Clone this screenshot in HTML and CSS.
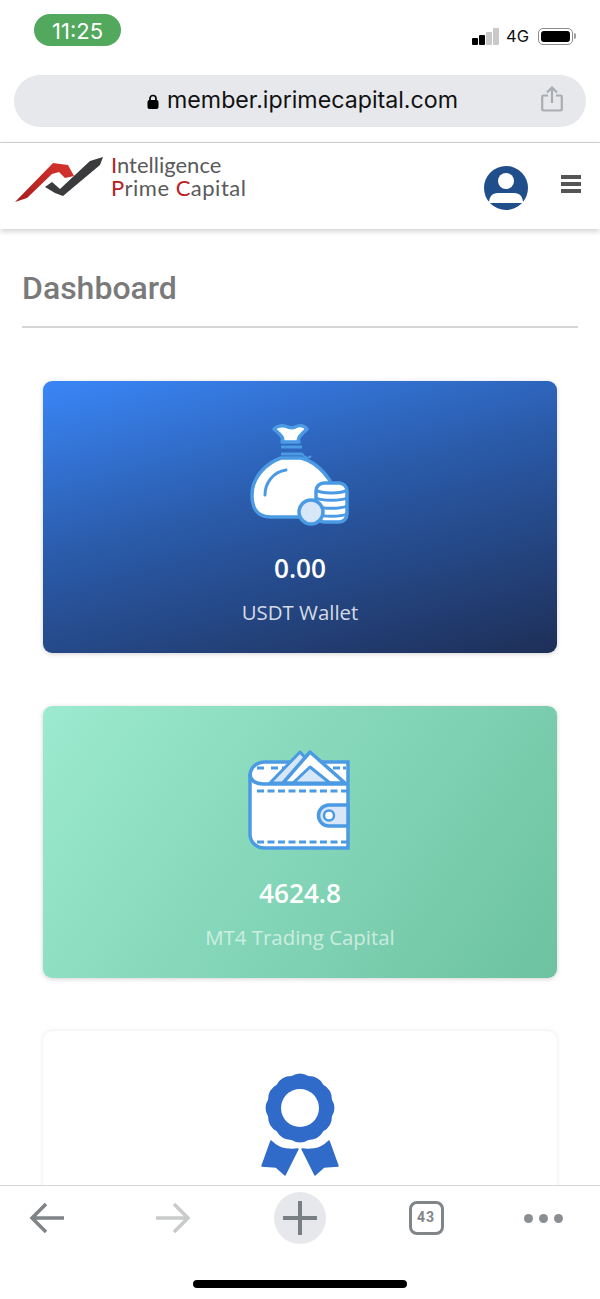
FILE: index.html
```html
<!DOCTYPE html>
<html lang="en">
<head>
    <meta charset="UTF-8">
    <meta name="viewport" content="width=device-width, initial-scale=1.0">
    <title>Dashboard</title>
    <link rel="stylesheet" href="styles.css">
</head>
<body>
    <div class="phone">
        <!-- Status bar -->
        <div class="status-bar">
            <div class="clock">11:25</div>
            <div class="status-right">
                <div class="signal">
                    <span class="bar bar-1"></span>
                    <span class="bar bar-2"></span>
                    <span class="bar bar-3"></span>
                    <span class="bar bar-4"></span>
                </div>
                <span class="network">4G</span>
                <div class="battery"><span class="battery-fill"></span></div>
                <span class="battery-tip"></span>
            </div>
        </div>

        <!-- Browser address bar -->
        <div class="url-wrap">
            <div class="url-bar">
                <div class="url-text">
                    <svg class="lock" width="12" height="15" viewBox="0 0 12 15">
                        <path d="M3 7V4.500a3 3 0 0 1 6 0V7" fill="none" stroke="#000" stroke-width="1.700"/>
                        <rect x="0.500" y="6" width="11" height="9" rx="2" fill="#000"/>
                    </svg>
                    <span>member.iprimecapital.com</span>
                </div>
                <svg class="share" width="22" height="26" viewBox="0 0 22 26">
                    <path d="M7 9.500H2.500a1.300 1.300 0 0 0-1.300 1.300v12.400a1.300 1.300 0 0 0 1.300 1.300h17a1.300 1.300 0 0 0 1.300-1.300V10.800a1.300 1.300 0 0 0-1.300-1.300H15" fill="none" stroke="#a9acb1" stroke-width="2.200"/>
                    <path d="M11 17V2M6 6.500 11 1.500l5 5" fill="none" stroke="#a9acb1" stroke-width="2.200"/>
                </svg>
            </div>
        </div>

        <!-- Site header -->
        <header class="site-header">
            <div class="logo">
                <svg width="92" height="50" viewBox="15 155 92 50">
                    <defs>
                        <linearGradient id="redBand" x1="0" y1="1" x2="1" y2="0">
                            <stop offset="0" stop-color="#a81c1c"/>
                            <stop offset="1" stop-color="#d8352f"/>
                        </linearGradient>
                    </defs>
                    <path d="M45 187 52 182 60 189 90 161 103 157 100 165 63 196 55 193Z" fill="#3b3b3d"/>
                    <path d="M15 202 53 163 68 165 74 176 65 178 59 172 52 174 27 198Z" fill="url(#redBand)"/>
                </svg>
                <div class="logo-text">
                    <div><span class="red">I</span>ntelligence</div>
                    <div class="logo-line-2"><span class="red">P</span>rime <span class="red">C</span>apital</div>
                </div>
            </div>
            <div class="header-right">
                <svg width="44" height="44" viewBox="0 0 44 44">
                    <circle cx="22" cy="22" r="22" fill="#1f4e8a"/>
                    <circle cx="22" cy="15" r="8" fill="#fff"/>
                    <path d="M5 37c0-6 3-10 9-10h16c6 0 9 4 9 10Z" fill="#fff"/>
                </svg>
                <div class="burger"><span></span><span></span><span></span></div>
            </div>
        </header>

        <!-- Page content -->
        <main class="content">
            <h1>Dashboard</h1>
            <hr class="title-rule">

            <div class="card card-blue">
                <svg class="card-icon" width="110" height="110" viewBox="0 0 110 110">
                    <path d="M36 38C24 42 7 55 7 75c0 14 6 22 18 22h45c12 0 20-6 20-19 0-18-18-36-34-40Z" fill="#fff" stroke="#4b9ae4" stroke-width="3.500"/>
                    <path d="M20 75c0-12 8-23 21-25" fill="none" stroke="#4b9ae4" stroke-width="3" stroke-linecap="round"/>
                    <path d="M36 27h21M36 34h21" stroke="#4b9ae4" stroke-width="3" fill="none"/>
                    <path d="M57 33c2 5 6 6 9 3" stroke="#4b9ae4" stroke-width="2" fill="none"/>
                    <path d="M37 22c2-4 0-6-8-13 4-4 10-4 14-2 3 1 5 1 7 0 4-2 9-2 12 2-7 7-10 9-8 13Z" fill="#fff" stroke="#4b9ae4" stroke-width="3.500" stroke-linejoin="round"/>
                    <rect x="71" y="63" width="31" height="39" rx="8" fill="#fff" stroke="#4b9ae4" stroke-width="3.500"/>
                    <path d="M71 70c6 4 25 4 31 0M71 78c6 3 25 3 31 0M71 86c6 3 25 3 31 0M71 94c6 3 25 3 31 0" fill="none" stroke="#4b9ae4" stroke-width="3"/>
                    <circle cx="66" cy="92" r="12" fill="#d8e7f7" stroke="#4b9ae4" stroke-width="3.500"/>
                </svg>
                <div class="card-value">0.00</div>
                <div class="card-label">USDT Wallet</div>
            </div>

            <div class="card card-green">
                <svg class="card-icon" width="110" height="110" viewBox="0 0 110 110">
                    <path d="M103 17H20C11 17 5 23 5 31v58c0 8 6 14 15 14h83Z" fill="#fff" stroke="#4b9ae4" stroke-width="3.500"/>
                    <path d="M12 23h9M26 23h16" fill="none" stroke="#4b9ae4" stroke-width="3" stroke-dasharray="7 4"/>
                    <path d="M88 23h13" fill="none" stroke="#4b9ae4" stroke-width="3" stroke-dasharray="7 3"/>
                    <path d="M25 38 55 7 65 18 48 38Z" fill="#d8e7f7" stroke="#4b9ae4" stroke-width="3" stroke-linejoin="round"/>
                    <path d="M38 38 65 7 100 38Z" fill="#fff" stroke="#4b9ae4" stroke-width="3.500" stroke-linejoin="round"/>
                    <path d="M48 38 65 22 85 38Z" fill="#d8e7f7" stroke="#4b9ae4" stroke-width="3" stroke-linejoin="round"/>
                    <path d="M5 29c0 6 5 10 13 10h85" fill="none" stroke="#4b9ae4" stroke-width="3.500"/>
                    <path d="M12 46h91M12 97h91" fill="none" stroke="#4b9ae4" stroke-width="3" stroke-dasharray="7 3.500"/>
                    <path d="M103 60H84a10.500 10.500 0 0 0 0 21h19Z" fill="#d8e7f7" stroke="#4b9ae4" stroke-width="3.500"/>
                    <circle cx="84" cy="70.500" r="5" fill="#fff" stroke="#4b9ae4" stroke-width="2.500"/>
                </svg>
                <div class="card-value">4624.8</div>
                <div class="card-label">MT4 Trading Capital</div>
            </div>

            <div class="card card-white">
                <svg class="card-icon" width="110" height="110" viewBox="0 0 110 110">
                    <path d="M26 71Q33 78 41 79 47 80 53 79L40 105 31 97 17 96Z" fill="#306bc9" stroke="#306bc9" stroke-width="1.500" stroke-linejoin="round"/>
                    <path d="M84 71Q77 78 69 79 63 80 57 79L70 105 79 97 93 96Z" fill="#306bc9" stroke="#306bc9" stroke-width="1.500" stroke-linejoin="round"/>
                    <path transform="translate(55 38)" d="M31.900 8.500Q32 18.500 23.300 23.300Q18.500 32 8.500 31.900Q0 37 -8.500 31.900Q-18.500 32 -23.300 23.300Q-32 18.500 -31.900 8.500Q-37 0 -31.900 -8.500Q-32 -18.500 -23.300 -23.300Q-18.500 -32 -8.500 -31.900Q0 -37 8.500 -31.900Q18.500 -32 23.300 -23.300Q32 -18.500 31.900 -8.500Q37 0 31.900 8.500Z" fill="#306bc9"/>
                    <circle cx="55" cy="38" r="19" fill="#fff"/>
                </svg>
            </div>
        </main>

        <!-- Browser bottom bar -->
        <nav class="bottom-bar">
            <div class="bottom-icons">
                <svg width="36" height="32" viewBox="0 0 36 32">
                    <path d="M35 16H3M17 2 3 16l14 14" fill="none" stroke="#7f8489" stroke-width="3.500"/>
                </svg>
                <svg width="36" height="32" viewBox="0 0 36 32">
                    <path d="M1 16h32M19 2l14 14-14 14" fill="none" stroke="#c9caca" stroke-width="3.500"/>
                </svg>
                <div class="new-tab">
                    <svg width="34" height="34" viewBox="0 0 34 34">
                        <path d="M17 0v34M0 17h34" stroke="#7a7f84" stroke-width="4" stroke-linecap="round"/>
                    </svg>
                </div>
                <div class="tabs">43</div>
                <div class="dots"><span></span><span></span><span></span></div>
            </div>
            <div class="home-bar"></div>
        </nav>
    </div>
</body>
</html>
```

FILE: styles.css
```css
body {
    font-family: 'Roboto', sans-serif;
    margin: 0;
    padding: 0;
    background: #fff;
}

.phone {
    height: 1299px;
    display: flex;
    flex-direction: column;
    overflow: hidden;
    background: #fff;
}

/* Status bar */
.status-bar {
    height: 62px;
    box-sizing: border-box;
    padding: 14px 24px 0 34px;
    display: flex;
    justify-content: space-between;
    align-items: flex-start;
}

.clock {
    width: 87px;
    height: 32px;
    border-radius: 16px;
    background: #52a85c;
    color: #fff;
    font-family: 'Inter', sans-serif;
    font-size: 22px;
    line-height: 34px;
    text-align: center;
}

.status-right {
    display: flex;
    align-items: center;
    margin-top: 13px;
    height: 18px;
}

.signal {
    display: flex;
    align-items: flex-end;
    gap: 1px;
    height: 17px;
}

.bar {
    width: 6px;
    border-radius: 1px;
    background: #000;
}

.bar-1 { height: 7px; }
.bar-2 { height: 10px; }
.bar-3 { height: 13px; background: #c9c9c9; }
.bar-4 { height: 17px; background: #c9c9c9; }

.network {
    font-family: 'Inter', sans-serif;
    font-size: 16.500px;
    margin: 0 9px 0 7px;
    color: #111;
}

.battery {
    width: 35px;
    height: 17px;
    box-sizing: border-box;
    border: 1px solid #8c8c8c;
    border-radius: 5px;
    padding: 2px;
}

.battery-fill {
    display: block;
    height: 100%;
    background: #000;
    border-radius: 3px;
}

.battery-tip {
    width: 2px;
    height: 6px;
    margin-left: 1px;
    background: #9a9a9a;
    border-radius: 0 2px 2px 0;
}

/* Address bar */
.url-wrap {
    padding: 13px 14px 15px;
    border-bottom: 1px solid #d6d6d8;
}

.url-bar {
    height: 52px;
    border-radius: 26px;
    background: #e7e8ec;
    display: grid;
    grid-template-columns: 1fr auto 1fr;
    align-items: center;
}

.url-text {
    grid-column: 2;
    display: flex;
    align-items: center;
    gap: 8px;
    font-family: 'Inter', sans-serif;
    font-size: 23.200px;
    color: #111;
    margin: 0 0 3px 5px;
}

.lock {
    margin-top: 3px;
}

.share {
    grid-column: 3;
    justify-self: end;
    margin: 0 23px 4px 0;
}

/* Site header */
.site-header {
    height: 86px;
    box-sizing: border-box;
    padding: 0 19px 0 15px;
    display: flex;
    justify-content: space-between;
    align-items: center;
    box-shadow: 0 2px 6px rgba(0, 0, 0, 0.2);
    position: relative;
}

.logo {
    display: flex;
    align-items: center;
    gap: 4px;
    margin-top: -12px;
}

.logo-text {
    font-family: 'Lato', sans-serif;
    font-size: 22px;
    line-height: 23px;
    color: #5a5a5c;
    margin-top: -9px;
}

.logo-line-2 {
    letter-spacing: 0.5px;
}

.red {
    color: #b8211f;
}

.header-right {
    display: flex;
    align-items: center;
    gap: 33px;
    margin-top: 4px;
}

.burger {
    display: flex;
    flex-direction: column;
    gap: 3.500px;
    margin-top: -8px;
}

.burger span {
    display: block;
    width: 20px;
    height: 3.500px;
    background: #555;
}

/* Content */
.content {
    flex: 1;
    min-height: 0;
    overflow: hidden;
    padding: 0 22px;
}

h1 {
    margin: 41px 0 0;
    font-size: 32px;
    line-height: 36px;
    font-weight: 500;
    color: #7a7a7a;
}

.title-rule {
    margin: 20px 0 53px;
    border: none;
    height: 2px;
    background: #d6d6d6;
}

.card {
    margin: 0 21px 53px;
    height: 272px;
    box-sizing: border-box;
    padding-top: 39px;
    border-radius: 9px;
    box-shadow: 0 1px 5px rgba(0, 0, 0, 0.18);
    display: flex;
    flex-direction: column;
    align-items: center;
    font-family: 'Open Sans', sans-serif;
}

.card-blue {
    background: linear-gradient(165deg, #3a86f7 0%, #2a5aa8 45%, #1e2f58 100%);
}

.card-green {
    background: linear-gradient(125deg, #9ceacf 0%, #6cc2a1 100%);
}

.card-white {
    background: #fff;
    box-shadow: 0 0 4px rgba(0, 0, 0, 0.1);
}

.card-value {
    margin-top: 21px;
    font-size: 26.200px;
    line-height: 34px;
    font-weight: 600;
    color: #fff;
}

.card-label {
    margin-top: 14px;
    font-size: 20.400px;
    line-height: 26px;
    color: rgba(255, 255, 255, 0.82);
}

.card-green .card-label {
    color: rgba(255, 255, 255, 0.62);
}

/* Bottom bar */
.bottom-bar {
    height: 114px;
    flex-shrink: 0;
    box-sizing: border-box;
    border-top: 1px solid #d6d6d8;
    background: #fff;
    padding-top: 6px;
}

.bottom-icons {
    display: grid;
    grid-template-columns: 94px 158px 96px 156px 78px;
    justify-items: center;
    align-items: center;
    height: 52px;
}

.new-tab {
    width: 52px;
    height: 52px;
    border-radius: 50%;
    background: #e7e8ec;
    display: flex;
    justify-content: center;
    align-items: center;
}

.tabs {
    width: 35px;
    height: 34px;
    box-sizing: border-box;
    border: 3.500px solid #80858a;
    border-radius: 8px;
    font-size: 14px;
    font-weight: 700;
    line-height: 27px;
    letter-spacing: 1px;
    text-align: center;
    color: #80858a;
}

.dots {
    display: flex;
    gap: 6px;
}

.dots span {
    width: 9px;
    height: 9px;
    border-radius: 50%;
    background: #8a8e93;
}

.home-bar {
    width: 214px;
    height: 8px;
    margin: 36px auto 0;
    border-radius: 4px;
    background: #000;
}
```
